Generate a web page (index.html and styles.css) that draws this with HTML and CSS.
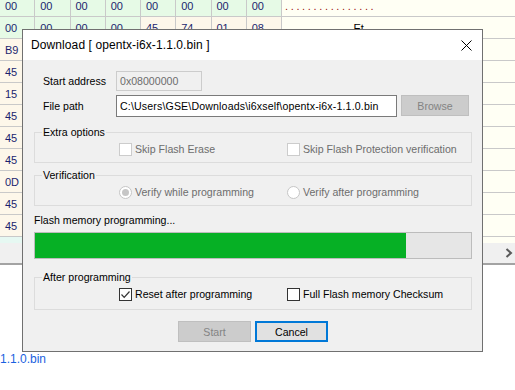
FILE: index.html
```html
<!DOCTYPE html>
<html>
<head>
<meta charset="utf-8">
<link rel="stylesheet" href="styles.css">
</head>
<body>
<div class="screen">
  <div class="hexview">
    <div class="rows">
      <div class="hexrow">
        <div class="cell g">00</div><div class="cell g">00</div><div class="cell g">00</div><div class="cell g">00</div>
        <div class="cell g">00</div><div class="cell g">00</div><div class="cell g">00</div><div class="cell g">00</div>
        <div class="ascii">................</div>
      </div>
      <div class="hexrow">
        <div class="cell g">00</div><div class="cell g">00</div><div class="cell g">00</div><div class="cell g">00</div>
        <div class="cell">45</div><div class="cell">74</div><div class="cell">01</div><div class="cell">08</div>
        <div class="ascii">............<span class="chr">Et</span>..</div>
      </div>
      <div class="hexrow"><div class="cell">B9</div><div class="cell"></div><div class="cell"></div><div class="cell"></div><div class="cell"></div><div class="cell"></div><div class="cell"></div><div class="cell"></div><div class="ascii"></div></div>
      <div class="hexrow"><div class="cell">45</div><div class="cell"></div><div class="cell"></div><div class="cell"></div><div class="cell"></div><div class="cell"></div><div class="cell"></div><div class="cell"></div><div class="ascii"></div></div>
      <div class="hexrow"><div class="cell">15</div><div class="cell"></div><div class="cell"></div><div class="cell"></div><div class="cell"></div><div class="cell"></div><div class="cell"></div><div class="cell"></div><div class="ascii"></div></div>
      <div class="hexrow"><div class="cell">45</div><div class="cell"></div><div class="cell"></div><div class="cell"></div><div class="cell"></div><div class="cell"></div><div class="cell"></div><div class="cell"></div><div class="ascii"></div></div>
      <div class="hexrow"><div class="cell">45</div><div class="cell"></div><div class="cell"></div><div class="cell"></div><div class="cell"></div><div class="cell"></div><div class="cell"></div><div class="cell"></div><div class="ascii"></div></div>
      <div class="hexrow"><div class="cell">45</div><div class="cell"></div><div class="cell"></div><div class="cell"></div><div class="cell"></div><div class="cell"></div><div class="cell"></div><div class="cell"></div><div class="ascii"></div></div>
      <div class="hexrow"><div class="cell">0D</div><div class="cell"></div><div class="cell"></div><div class="cell"></div><div class="cell"></div><div class="cell"></div><div class="cell"></div><div class="cell"></div><div class="ascii"></div></div>
      <div class="hexrow"><div class="cell">45</div><div class="cell"></div><div class="cell"></div><div class="cell"></div><div class="cell"></div><div class="cell"></div><div class="cell"></div><div class="cell"></div><div class="ascii"></div></div>
      <div class="hexrow"><div class="cell">45</div><div class="cell"></div><div class="cell"></div><div class="cell"></div><div class="cell"></div><div class="cell"></div><div class="cell"></div><div class="cell"></div><div class="ascii"></div></div>
      <div class="hexrow"><div class="cell c2"></div><div class="cell"></div><div class="cell"></div><div class="cell"></div><div class="cell"></div><div class="cell"></div><div class="cell"></div><div class="cell"></div><div class="ascii"></div></div>
    </div>
  </div>
  <div class="hscroll">
    <svg class="chev" width="8" height="10" viewBox="0 0 8 10"><path d="M1.5 1 L6 5 L1.5 9" fill="none" stroke="#5a5a5a" stroke-width="2"/></svg>
  </div>
  <div class="below"><span class="link">1.1.0.bin</span></div>

  <div class="dialog">
    <div class="titlebar">
      <span class="title">Download [ opentx-i6x-1.1.0.bin ]</span>
      <svg class="close" width="11" height="11" viewBox="0 0 11 11"><path d="M0.5 0.5 L10.5 10.5 M10.5 0.5 L0.5 10.5" stroke="#000" stroke-width="1" fill="none"/></svg>
    </div>
    <div class="dbody">
      <div class="frow first">
        <span class="flabel">Start address</span>
        <div class="input disabled addr">0x08000000</div>
      </div>
      <div class="frow">
        <span class="flabel">File path</span>
        <div class="input path">C:\Users\GSE\Downloads\i6xself\opentx-i6x-1.1.0.bin</div>
        <div class="btn disabled browse">Browse</div>
      </div>

      <div class="group g1">
        <span class="glabel">Extra options</span>
        <div class="grow">
          <div class="opt off"><span class="chk"></span><span>Skip Flash Erase</span></div>
          <div class="opt off"><span class="chk"></span><span>Skip Flash Protection verification</span></div>
        </div>
      </div>

      <div class="group g2">
        <span class="glabel">Verification</span>
        <div class="grow">
          <div class="opt off"><span class="radio sel"></span><span>Verify while programming</span></div>
          <div class="opt off"><span class="radio"></span><span>Verify after programming</span></div>
        </div>
      </div>

      <div class="plabel">Flash memory programming...</div>
      <div class="progress"><div class="fill" style="width:85%"></div></div>

      <div class="group g3">
        <span class="glabel">After programming</span>
        <div class="grow">
          <div class="opt"><span class="chk on"><svg width="11" height="11" viewBox="0 0 11 11"><path d="M1.5 5.5 L4.2 8.3 L9.5 2.5" fill="none" stroke="#333" stroke-width="1.2"/></svg></span><span>Reset after programming</span></div>
          <div class="opt"><span class="chk"></span><span>Full Flash memory Checksum</span></div>
        </div>
      </div>

      <div class="buttons">
        <div class="btn disabled">Start</div>
        <div class="btn default">Cancel</div>
      </div>
    </div>
  </div>
</div>
</body>
</html>
```
FILE: styles.css
```css
html, body {
  margin: 0;
  padding: 0;
  background: #ffffff;
}
body {
  font-family: "Liberation Sans", Arial, sans-serif;
  font-size: 11px;
  color: #000;
}
.screen {
  position: relative;
  width: 515px;
  height: 390px;
  overflow: hidden;
}
.hexview {
  height: 243px;
  overflow: hidden;
}
.rows {
  margin-top: -5px;
}
.hexrow {
  display: grid;
  grid-template-columns: repeat(8, 35.25px) 1fr;
  height: 22px;
}
.cell {
  box-sizing: border-box;
  height: 22px;
  line-height: 22px;
  padding-left: 5px;
  background: #fdf7ea;
  border-right: 1px solid #c9c9c9;
  border-bottom: 1px solid #c9c9c9;
  color: #1b1f6e;
  font-size: 11px;
}
.cell.g {
  background: #e6fae6;
}
.cell.c2 {
  background: #e6f8f2;
}
.ascii {
  box-sizing: border-box;
  height: 22px;
  line-height: 22px;
  padding-left: 3px;
  background: #fffff4;
  border-bottom: 1px solid #c9c9c9;
  color: #9c1010;
  letter-spacing: 2.65px;
  font-size: 11px;
  white-space: nowrap;
}
.ascii .chr {
  color: #000;
  letter-spacing: 0;
  margin-right: 2px;
}
.hscroll {
  height: 20px;
  background: #f0f0f0;
  border-bottom: 2px solid #a3a3a3;
  display: flex;
  align-items: center;
  justify-content: flex-end;
  padding-right: 2px;
}
.below {
  padding-top: 87px;
  line-height: 14px;
}
.link {
  color: #1a5fe0;
  font-size: 12px;
}

/* dialog window */
.dialog {
  position: absolute;
  left: 22px;
  top: 29px;
  width: 461px;
  height: 323px;
  box-sizing: border-box;
  border: 1px solid #707070;
  background: #f0f0f0;
  display: flex;
  flex-direction: column;
  font-size: 10.6px;
}
.titlebar {
  height: 30px;
  flex: none;
  background: #ffffff;
  display: flex;
  align-items: center;
  justify-content: space-between;
  padding: 0 10px 0 8px;
}
.title {
  font-size: 12px;
  letter-spacing: 0.1px;
  color: #000;
}
.close {
  display: block;
}
.dbody {
  padding: 0 10px 0 11px;
}
.frow {
  display: flex;
  align-items: center;
  margin-top: 4px;
}
.frow.first {
  margin-top: 11px;
}
.flabel {
  width: 73px;
  padding-left: 9px;
  flex: none;
  white-space: nowrap;
}
.input {
  box-sizing: border-box;
  border: 1px solid #7a7a7a;
  background: #ffffff;
  padding-left: 3px;
  display: flex;
  align-items: center;
  white-space: nowrap;
  overflow: hidden;
}
.input.addr {
  width: 86px;
  height: 20px;
  border-color: #cccccc;
  background: #f0f0f0;
  color: #6d6d6d;
}
.input.path {
  width: 281px;
  height: 22px;
  letter-spacing: 0.15px;
}
.btn {
  box-sizing: border-box;
  width: 73px;
  height: 21px;
  display: flex;
  align-items: center;
  justify-content: center;
  border: 1px solid #adadad;
  background: #e1e1e1;
}
.btn.disabled {
  background: #cccccc;
  border-color: #bfbfbf;
  color: #838383;
}
.btn.browse {
  width: 68px;
  height: 21px;
  margin-left: 4px;
  align-self: flex-start;
}
.btn.default {
  border: 2px solid #0078d7;
  background: #e1e1e1;
  color: #000;
}
.group {
  border: 1px solid #dcdcdc;
  padding-bottom: 6px;
}
.group.g1 {
  margin-top: 15px;
}
.group.g2 {
  margin-top: 12px;
}
.group.g3 {
  margin-top: 18px;
  padding-bottom: 8px;
}
.glabel {
  display: block;
  width: max-content;
  line-height: 13px;
  margin: -7px 0 0 7px;
  padding: 0 1px;
  background: #f0f0f0;
}
.grow {
  display: flex;
  margin-top: 4px;
  padding-left: 84px;
}
.opt {
  display: flex;
  align-items: center;
  gap: 3px;
  line-height: 13px;
}
.opt:first-child {
  width: 168px;
}
.opt.off {
  color: #6d6d6d;
}
.chk {
  box-sizing: border-box;
  width: 13px;
  height: 13px;
  border: 1px solid #333333;
  background: #ffffff;
  display: flex;
  align-items: center;
  justify-content: center;
  flex: none;
}
.chk svg {
  display: block;
}
.opt.off .chk {
  border-color: #cccccc;
}
.radio {
  box-sizing: border-box;
  width: 13px;
  height: 13px;
  border-radius: 50%;
  border: 1px solid #c6c6c6;
  background: #ffffff;
  display: flex;
  align-items: center;
  justify-content: center;
  flex: none;
}
.radio.sel::after {
  content: "";
  width: 7px;
  height: 7px;
  border-radius: 50%;
  background: #c6c6c6;
}
.plabel {
  margin-top: 8px;
  line-height: 13px;
}
.progress {
  margin-top: 5px;
  height: 27px;
  box-sizing: border-box;
  border: 1px solid #bcbcbc;
  background: #e6e6e6;
}
.fill {
  height: 100%;
  background: #06b025;
}
.buttons {
  display: flex;
  justify-content: center;
  gap: 4px;
  margin-top: 11px;
}
```
